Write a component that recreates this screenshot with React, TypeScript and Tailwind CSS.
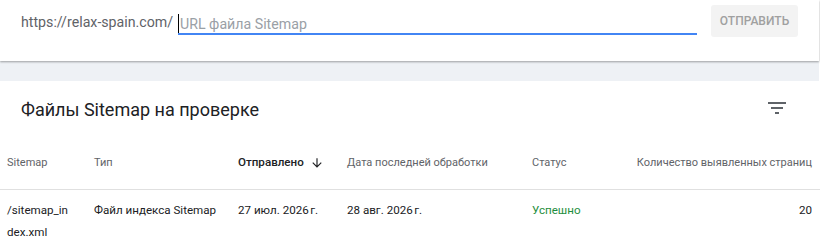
import React from "react";

export default function App() {
  return (
    <div className="w-[820px] h-[252px] bg-white overflow-hidden" style={{ fontFamily: "Roboto, 'Noto Sans', sans-serif" }}>
      {/* top submit bar */}
      <div className="relative z-10 h-[61px] w-[819px] bg-white shadow-[0_1px_2px_rgba(0,0,0,0.35)] flex items-start">
        <div className="w-[178px] pl-[21px] pt-[12px] text-[14.2px] leading-[20px] text-[#5f6368] whitespace-nowrap">https://relax-spain.com/</div>
        <div className="mt-[11px] w-[519px] h-[24px] border-b-2 border-[#4285f4] flex items-start">
          <div className="w-px h-[19px] bg-black mt-[3px]"></div>
          <div className="text-[14.2px] leading-[20px] text-[#9aa0a6] pt-[3px] ml-px">URL файла Sitemap</div>
        </div>
        <div className="ml-[14px] mt-[5px] w-[87px] h-[32px] rounded-[3px] bg-[#f3f3f3] flex items-center justify-center text-[12px] font-medium text-[#a0a0a0]">ОТПРАВИТЬ</div>
      </div>
      <div className="h-[20px] w-[819px] bg-[#eef1f5]"></div>
      {/* table card */}
      <div className="bg-white">
        <div className="h-[56px] flex items-center justify-between pl-[21px] pr-[31px]">
          <div className="text-[18px] text-[#202124] leading-[24px] mt-[2px]">Файлы Sitemap на проверке</div>
          <svg width="24" height="24" viewBox="0 0 24 24" className="mt-[-3px]">
            <path d="M10 18h4v-2h-4v2zM3 6v2h18V6H3zm3 7h12v-2H6v2z" fill="#5f6368" />
          </svg>
        </div>
        <div className="h-[53px] flex items-center text-[11px] text-[#5f6368] border-b border-[#e0e0e0]">
          <div className="w-[94px] pl-[7px]">Sitemap</div>
          <div className="w-[144px]">Тип</div>
          <div className="w-[109px] flex items-center text-[11.6px] text-[#202124] font-medium">
            Отправлено
            <svg width="14" height="14" viewBox="0 0 24 24" className="ml-[6px]">
              <path d="M20 12l-1.41-1.41L13 16.17V4h-2v12.17l-5.58-5.59L4 12l8 8 8-8z" fill="#202124" />
            </svg>
          </div>
          <div className="w-[185px]">Дата последней обработки</div>
          <div className="w-[106px]">Статус</div>
          <div className="w-[174px] flex justify-end whitespace-nowrap">Количество выявленных страниц</div>
        </div>
        <div className="flex items-start text-[11.6px] text-[#202124] leading-[22px] pt-[9px]">
          <div className="w-[94px] pl-[7px]">
            <div>/sitemap_in</div>
            <div>dex.xml</div>
          </div>
          <div className="w-[144px]">Файл индекса Sitemap</div>
          <div className="w-[109px]">27 июл. 2026{"\u202F"}г.</div>
          <div className="w-[185px]">28 авг. 2026{"\u202F"}г.</div>
          <div className="w-[106px] text-[#1e8e3e]">Успешно</div>
          <div className="w-[174px] text-right">20</div>
        </div>
      </div>
    </div>
  );
}
